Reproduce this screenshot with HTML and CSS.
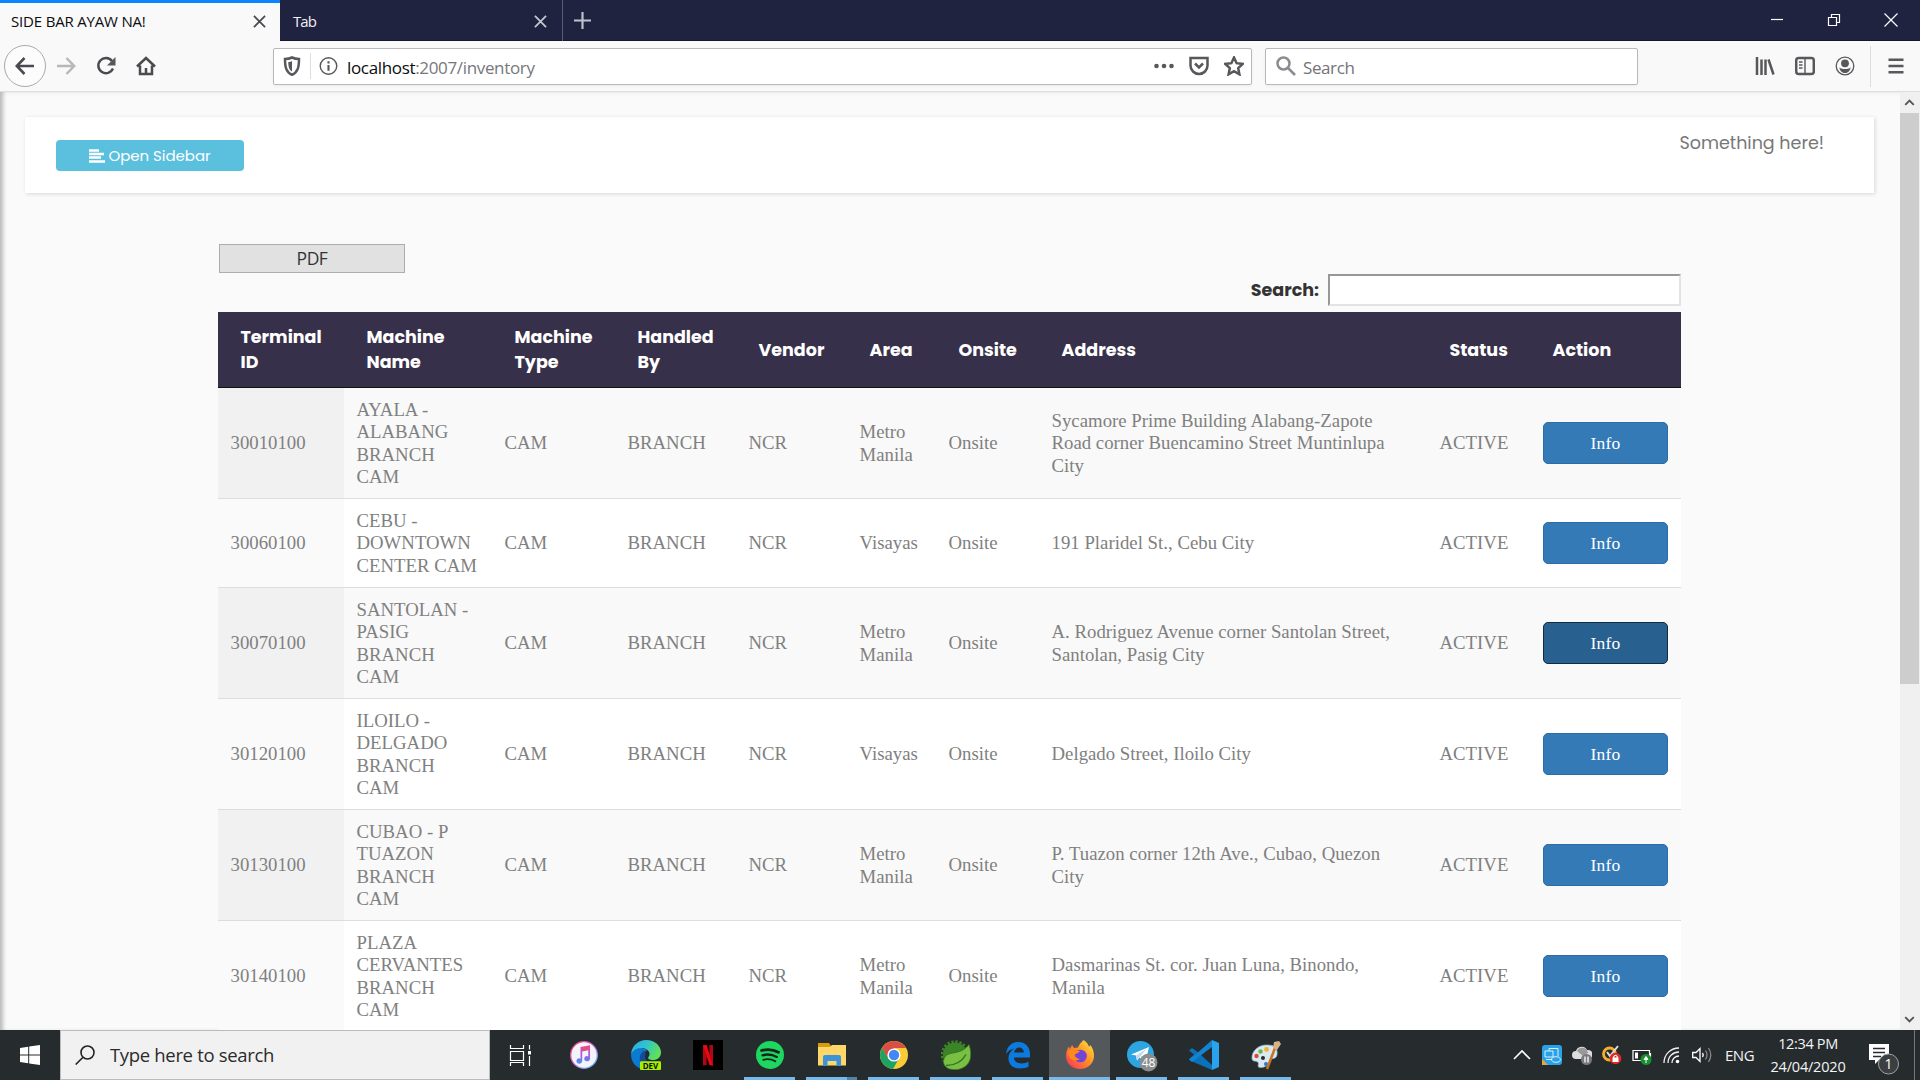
FILE: index.html
```html
<!DOCTYPE html>
<html lang="en">
<head>
<meta charset="utf-8">
<title>SIDE BAR AYAW NA!</title>
<link rel="stylesheet" href="styles.css">
</head>
<body>
<div class="screen">
  <div class="tabs">
    <div class="tab active"><span class="t-main">SIDE BAR AYAW NA!</span><svg class="x" viewBox="0 0 14 14"><path d="M1 1l12 12M13 1L1 13"/></svg></div>
    <div class="tab idle"><span class="t-idle">Tab</span><svg class="x" viewBox="0 0 14 14"><path d="M1 1l12 12M13 1L1 13"/></svg></div>
    <svg class="plus" viewBox="0 0 18 18"><path d="M9 0v18M0 9h18"/></svg>
    <div class="wincontrols">
      <svg viewBox="0 0 14 14"><path d="M1 6.500h12"/></svg>
      <svg viewBox="0 0 14 14"><path d="M1.500 4.500h8v8h-8zM4.500 4V1.500h8v8H10"/></svg>
      <svg viewBox="0 0 14 14"><path d="M.5.5l13 13M13.500.5l-13 13"/></svg>
    </div>
  </div>

  <div class="nav">
    <span class="back"><svg viewBox="0 0 20 20"><path d="M19 10H2M9.500 2L1.800 10l7.700 8"/></svg></span>
    <svg class="ico fwd" viewBox="0 0 20 20"><path d="M1 10h17M10.500 2l7.700 8-7.700 8"/></svg>
    <svg class="ico reload" viewBox="0 0 20 20"><path d="M17 12.500A7.600 7.600 0 1 1 16 5"/><path class="fill" d="M19.500 1v8.500H11z"/></svg>
    <svg class="ico home" viewBox="0 0 20 20"><path d="M1 10.500L10 2l9 8.500M4 9.500V18h12V9.500M10 18v-6"/></svg>
    <div class="url">
      <svg class="ico shield" viewBox="0 0 20 20"><path d="M10 1.500c2.500 1.200 4.500 1.500 7 1.500 0 8-1 13-7 15.800C4 16 3 11 3 3c2.500 0 4.500-.3 7-1.500z"/><path class="fill" d="M10 5v10.500c-3-1.700-3.700-5-3.700-9.500 1.500 0 2.500-.4 3.700-1z"/></svg>
      <i class="divider"></i>
      <svg class="ico info" viewBox="0 0 20 20"><circle cx="10" cy="10" r="8.700"/><path class="stem" d="M10 9v6M10 5v2.300"/></svg>
      <span class="address"><b>localhost</b>:2007/inventory</span>
      <svg class="ico dots" viewBox="0 0 20 20"><circle cx="2.500" cy="10" r="2.300"/><circle cx="10" cy="10" r="2.300"/><circle cx="17.500" cy="10" r="2.300"/></svg>
      <svg class="ico" viewBox="0 0 20 20"><path d="M1.500 2h17v7.500a8.500 8.500 0 0 1-17 0zM6 7.500l4 4 4-4"/></svg>
      <svg class="ico star" viewBox="0 0 20 20"><path d="M10 1.500l2.600 5.700 6.100.7-4.500 4.200 1.200 6.200-5.400-3.100-5.400 3.100 1.200-6.200L1.300 7.900l6.100-.7z"/></svg>
    </div>
    <div class="find"><svg class="ico" viewBox="0 0 20 20"><circle cx="7.500" cy="7.500" r="6"/><path d="M12 12l7 7"/></svg><span>Search</span></div>
    <div class="tools">
      <svg class="ico" viewBox="0 0 20 20"><path d="M2 1v18M6.500 3.500V19M10.500 3.500V19M13.500 3.500l5 15"/></svg>
      <svg class="ico" viewBox="0 0 20 20"><rect x="1.200" y="2" width="17.600" height="16" rx="2.500"/><path class="thin" d="M10 2v16M4 6h3.500M4 9h3.500M4 12h3.500"/></svg>
      <svg class="ico user" viewBox="0 0 20 20"><circle cx="10" cy="10" r="8.800"/><circle class="fill" cx="10" cy="7.300" r="3.900"/><path class="fill" d="M4.300 11.500c3 2 8.400 2 11.400 0-1 4-3 5.500-5.700 5.500s-4.700-1.500-5.700-5.500z"/></svg>
      <i class="divider"></i>
      <svg class="ico burger" viewBox="0 0 20 20"><path d="M2.500 3.700h15M2.500 10h15M2.500 16.300h15"/></svg>
    </div>
  </div>

  <div class="viewport">
    <div class="page">
      <header class="banner">
        <button class="open"><svg viewBox="0 0 16 14"><path d="M0 1.500h10M0 5h15M0 8.500h12M0 12.500h16"/></svg><span>Open Sidebar</span></button>
        <span class="something">Something here!</span>
      </header>
      <main class="content">
        <button class="pdf">PDF</button>
        <label class="search"><span>Search:</span><input type="text"></label>
        <table>
          <colgroup><col class="c1"><col class="c2"><col class="c3"><col class="c4"><col class="c5"><col class="c6"><col class="c7"><col class="c8"><col class="c9"><col class="c10"></colgroup>
          <thead><tr><th>Terminal<br>ID</th><th>Machine<br>Name</th><th>Machine<br>Type</th><th>Handled<br>By</th><th>Vendor</th><th>Area</th><th>Onsite</th><th>Address</th><th>Status</th><th>Action</th></tr></thead>
          <tbody>
            <tr><td>30010100</td><td>AYALA -<br>ALABANG<br>BRANCH<br>CAM</td><td>CAM</td><td>BRANCH</td><td>NCR</td><td>Metro<br>Manila</td><td>Onsite</td><td>Sycamore Prime Building Alabang-Zapote<br>Road corner Buencamino Street Muntinlupa<br>City</td><td>ACTIVE</td><td><button class="btn">Info</button></td></tr>
            <tr class="short"><td>30060100</td><td>CEBU -<br>DOWNTOWN<br>CENTER CAM</td><td>CAM</td><td>BRANCH</td><td>NCR</td><td>Visayas</td><td>Onsite</td><td>191 Plaridel St., Cebu City</td><td>ACTIVE</td><td><button class="btn">Info</button></td></tr>
            <tr><td>30070100</td><td>SANTOLAN -<br>PASIG<br>BRANCH<br>CAM</td><td>CAM</td><td>BRANCH</td><td>NCR</td><td>Metro<br>Manila</td><td>Onsite</td><td>A. Rodriguez Avenue corner Santolan Street,<br>Santolan, Pasig City</td><td>ACTIVE</td><td><button class="btn pressed">Info</button></td></tr>
            <tr><td>30120100</td><td>ILOILO -<br>DELGADO<br>BRANCH<br>CAM</td><td>CAM</td><td>BRANCH</td><td>NCR</td><td>Visayas</td><td>Onsite</td><td>Delgado Street, Iloilo City</td><td>ACTIVE</td><td><button class="btn">Info</button></td></tr>
            <tr><td>30130100</td><td>CUBAO - P<br>TUAZON<br>BRANCH<br>CAM</td><td>CAM</td><td>BRANCH</td><td>NCR</td><td>Metro<br>Manila</td><td>Onsite</td><td>P. Tuazon corner 12th Ave., Cubao, Quezon<br>City</td><td>ACTIVE</td><td><button class="btn">Info</button></td></tr>
            <tr><td>30140100</td><td>PLAZA<br>CERVANTES<br>BRANCH<br>CAM</td><td>CAM</td><td>BRANCH</td><td>NCR</td><td>Metro<br>Manila</td><td>Onsite</td><td>Dasmarinas St. cor. Juan Luna, Binondo,<br>Manila</td><td>ACTIVE</td><td><button class="btn">Info</button></td></tr>
          </tbody>
        </table>
      </main>
    </div>
    <div class="scrollbar">
      <svg viewBox="0 0 20 21"><path d="M5.500 13l4.500-4.500 4.500 4.500"/></svg>
      <i class="thumb"></i>
      <svg class="down" viewBox="0 0 20 21"><path d="M5.500 8l4.500 4.500 4.500-4.500"/></svg>
    </div>
  </div>

  <div class="taskbar">
    <div class="start"><svg viewBox="0 0 20 20"><path d="M0 3l8.200-1.200v7.700H0zM9.200 1.600L20 0v9.500H9.200zM0 10.500h8.200v7.700L0 17zM9.200 10.500H20V20L9.200 18.400z"/></svg></div>
    <div class="type"><svg viewBox="0 0 20 20"><circle cx="12.500" cy="7.500" r="6.500"/><path d="M8 12.200L.7 19.500"/></svg><span>Type here to search</span></div>
    <div class="apps">
      <div class="app taskview"><svg viewBox="0 0 30 30"><path d="M4.500 5v3.500h13V5M4.500 11.500h13v9h-13zM4.500 26v-3.500h13V26M23.500 5v4.500M23.500 16v10"/><path class="blk" d="M22 11h3v3.500h-3z"/></svg></div>
      <div class="app"><svg viewBox="0 0 30 30"><defs><linearGradient id="note" x1="0" y1="0" x2="0" y2="1"><stop offset="0" stop-color="#fa4a66"/><stop offset=".55" stop-color="#a457e8"/><stop offset="1" stop-color="#3b9df5"/></linearGradient><linearGradient id="ring" x1="0" y1="0" x2="1" y2="1"><stop offset="0" stop-color="#fb4467"/><stop offset=".5" stop-color="#c765e0"/><stop offset="1" stop-color="#3bd0f5"/></linearGradient></defs><circle cx="15" cy="15" r="13.300" fill="#f5f3fa" stroke="url(#ring)" stroke-width="1.300"/><path fill="url(#note)" d="M11.500 7L21 5.200v13.500a2.900 2.600 0 1 1-1.700-2.300v-6.200l-6.100 1.200v9.600a2.900 2.600 0 1 1-1.700-2.300z"/></svg></div>
      <div class="app"><svg viewBox="0 0 30 30"><defs><linearGradient id="edge" x1="0" y1="0" x2="1" y2=".4"><stop offset="0" stop-color="#2aa9e9"/><stop offset=".5" stop-color="#2fc3cf"/><stop offset="1" stop-color="#5fe05c"/></linearGradient></defs><path fill="#0d7ad2" d="M0 14C3 8 12 6 16 10c-4 3-4 8-1 11 3 2 8 2 12 0-3 6-8 8.500-13 8.500C6 29 0 23 0 14z"/><path fill="#154b97" d="M13 10.500c-5 3-6 12-1 16 3 2.500 9 2 13-2-6 0-13-4-10.500-11z"/><path fill="url(#edge)" d="M0 14C1 5 8 0 15 0c9 0 15 6 15 12.500 0 5-4 7.500-8 7.500-3 0-6-1-4.500-3 3-4-.5-8-5.500-9C7 7.500 2.500 9.500 0 14z"/><rect x="9" y="21.300" width="21" height="8.700" rx="1" fill="#a4f000"/><text x="19.500" y="28.500" font-size="8" font-weight="700" text-anchor="middle" fill="#111">DEV</text></svg></div>
      <div class="app"><svg viewBox="0 0 30 30"><path fill="#000" d="M0 0h30v30H0z"/><path fill="#b20710" d="M10 5h3.600v20L10 25.500zM16.400 5H20v20.500l-3.600-.5z"/><path fill="#e50914" d="M10 5h3.600L20 25.500l-3.600-.5z"/></svg></div>
      <div class="app run"><svg viewBox="0 0 30 30"><circle cx="15" cy="15" r="14" fill="#1ed760"/><path fill="none" stroke="#16261c" stroke-linecap="round" stroke-width="2.800" d="M6.500 10.500c6-1.600 12-1 17 1.800"/><path fill="none" stroke="#16261c" stroke-linecap="round" stroke-width="2.300" d="M7.500 15.300c5-1.400 10-.8 14.300 1.600"/><path fill="none" stroke="#16261c" stroke-linecap="round" stroke-width="1.900" d="M8.300 19.800c4-1.100 8.500-.6 12 1.400"/></svg></div>
      <div class="app run group"><svg viewBox="0 0 30 30"><path fill="#d99a0b" d="M1 3h11l2 3v5H1z"/><path fill="#ffd668" d="M1 7h12l2-2h14v20.500H1z"/><path fill="#3b94da" d="M6 26V17q0-2 2-2h14q2 0 2 2v9h-4.500v-5h-9v5z"/></svg></div>
      <div class="app run"><svg viewBox="0 0 30 30"><circle cx="15" cy="15" r="14" fill="#f9cb35"/><path fill="#d94f43" d="M2.900 8A14 14 0 0 1 27.100 8H15l-6 11z"/><path fill="#1da462" d="M2.900 8A14 14 0 0 0 14 29l6-10.500-11 0z"/><circle cx="15" cy="15" r="6.600" fill="#fff"/><circle cx="15" cy="15" r="5.200" fill="#4688f1"/></svg></div>
      <div class="app run"><svg viewBox="0 0 30 30"><circle cx="14" cy="14.500" r="12" fill="#3b8526"/><circle cx="14" cy="14.500" r="12.900" fill="none" stroke="#3b8526" stroke-width="2.600" stroke-dasharray="2.300 1.750"/><path fill="#78bf43" stroke="#2f6e1f" stroke-width=".8" d="M28 4.500c2.500 7 2.500 14-.5 18.500-4 6-12 8-19 6-6-2-8-8-4-13 5-5 16-1 23.500-11.500z"/><path fill="none" stroke="#327320" stroke-width="1.500" d="M5 25.500c9 0 16-4 20-11"/></svg></div>
      <div class="app run"><svg viewBox="0 0 30 30"><path fill="#0b7be0" d="M3 14C4 6 9 2 15.500 2 23 2 27 8 27 14v3.500H11c0 4 3.500 6 7.500 6 3 0 5.500-.8 7-2v5.300C23.500 28 20.500 28.500 17 28.500c-7 0-11.500-4-11.500-10 0-4.500 2.500-8 6-10C8 9 5 11 3 14zm8.200-1.500h9.600c0-3-1.800-5-4.600-5-2.700 0-4.600 2-5 5z"/></svg></div>
      <div class="app run on"><svg viewBox="0 0 30 30"><defs><linearGradient id="fox" x1="1" y1="0" x2="0" y2="1"><stop offset="0" stop-color="#fff044"/><stop offset=".45" stop-color="#ff9124"/><stop offset="1" stop-color="#f72c62"/></linearGradient></defs><path fill="url(#fox)" d="M18.500 0c3 2 5 4 5.500 7l1.200-2C28 8 29 12 29 16c0 7-6 13-14 13S1 23 1 16c0-4 1-7 3-9.500L5 9l2-4 2 3 4-.5c.5-2.500 3-5 5.500-7.500z"/><circle cx="15.500" cy="16" r="6.300" fill="#7243d7"/><path fill="#ff8a1c" d="M2 12l4-2.500 4 1 5 .5c-1 2-4 2.500-5 3.500s1 4 5 4.500c-4 3-10 1-11-3z"/></svg></div>
      <div class="app run"><svg viewBox="0 0 34 34"><circle cx="15.500" cy="16.500" r="13.500" fill="#2ca5e0"/><path fill="#fff" d="M6 16.500L24 9l-3.500 15-6-4.500-2.500 3-1-5z"/><path fill="#c5dbe8" d="M11 17.500L22 10.500l-7.500 9-2.500 3z"/><circle cx="23.500" cy="24.500" r="9" fill="#8a8d8f"/><text x="23.500" y="28.700" font-size="12" text-anchor="middle" fill="#fff">48</text></svg></div>
      <div class="app run"><svg viewBox="0 0 30 30"><path fill="#0a72bb" d="M0 10.500L3 8l5 3.500L23 25v5L1 20.500 0 19l5-4.500z"/><path fill="#1683ce" d="M0 19.500L3 22 23 7V0L6 15z"/><path fill="#29a3ee" d="M23 0l7 3v24l-7 3z"/></svg></div>
      <div class="app run"><svg viewBox="0 0 30 30"><path fill="#d9e8f2" stroke="#8ba9ba" stroke-width=".7" d="M1 19C0 11 8 4 17 5c7 0 10 4 9 10-1 5-5 2-7 6s-5 7-10 6.500c-4-.5 0-4-2.500-5.500S2 22 1 19z"/><circle cx="5.500" cy="16" r="2.200" fill="#dc4b36"/><circle cx="9.500" cy="11.500" r="2.200" fill="#6bb840"/><circle cx="15.500" cy="9.500" r="2.400" fill="#f2b42e"/><circle cx="12" cy="18" r="2" fill="#272b2e"/><circle cx="15" cy="24" r="2" fill="#3576c5"/><path stroke="#c87420" stroke-width="2.500" d="M16 29l8-21"/><path fill="#d5b386" d="M22 8l1-6 5-1 2 3-4 6z"/></svg></div>
    </div>
    <div class="tray">
      <svg class="chev" viewBox="0 0 20 20"><path d="M2 14l8-8 8 8"/></svg>
      <svg viewBox="0 0 20 20"><rect width="20" height="20" rx="3" fill="#2aa2e5"/><path fill="none" stroke="#d3f2ff" stroke-width="1" d="M3 6h8v6H3zM7 6V3.500h9V11M4 14.500h6"/><ellipse cx="14" cy="14.500" rx="4.300" ry="2.800" fill="none" stroke="#d3f2ff"/><path fill="#e9a63b" d="M0 14l6 6H0z"/></svg>
      <svg viewBox="0 0 20 20"><path fill="#ddd" d="M4 14a4 4 0 0 1 0-8 6 6 0 0 1 11-1 4.500 4.500 0 0 1 2 9z"/><path fill="#999" d="M5 6a6 6 0 0 1 10-1l1 3-5 3z"/><circle cx="14.500" cy="14.500" r="5.500" fill="#77797b"/><path stroke="#fff" stroke-width="1.300" d="M13 11.500v6M16 11.500v6"/></svg>
      <svg viewBox="0 0 20 20"><circle cx="7.500" cy="9" r="6" fill="none" stroke="#f4af2c" stroke-width="2.800"/><path fill="none" stroke="#ddd" stroke-width="2" d="M5 7l3 4 8-10"/><circle cx="13.500" cy="13.500" r="5.800" fill="#dc2b22"/><path fill="#fff" d="M10.500 12.500h6V17h-6z"/><path fill="none" stroke="#fff" stroke-width="1.200" d="M11.800 13v-1.500q1.700-2.500 3.400 0V13"/></svg>
      <svg viewBox="0 0 20 20"><path fill="none" stroke="#fff" stroke-width="1.200" d="M1 5.500h16.500v10H1zM18.500 8v4"/><path fill="#fff" d="M3 7.500h3v6H3z"/><circle cx="14" cy="14.500" r="5.500" fill="#17912b"/><path stroke="#fff" fill="#fff" d="M14 11.500l2 3h-4zM14 14v4"/></svg>
      <svg viewBox="0 0 20 20"><path fill="none" stroke="#f2f2f2" stroke-width="1.300" d="M2 18C2 9 9 3 17 3M6 18C6 11.500 11 7 17 7M10 18c0-4 3-7 7-7"/><circle cx="15.500" cy="16.500" r="1.800" fill="#fff"/></svg>
      <svg viewBox="0 0 20 20"><path fill="none" stroke="#fff" stroke-width="1.300" d="M.7 7.500H4L8 3.500v13l-4-4H.7zM10.500 8q1.500 2 0 4"/><path fill="none" stroke="#888" stroke-width="1.300" d="M13.500 5.500q3 4.500 0 9M16.500 3q4.500 7 0 14"/></svg>
      <span class="eng">ENG</span>
      <span class="clock"><span class="time">12:34 PM</span><span>24/04/2020</span></span>
      <svg class="notif" viewBox="0 0 32 32"><path fill="#fff" d="M1 1h20v16H11l-4 4v-4H1z"/><path fill="none" stroke="#272b2e" stroke-width="1.300" d="M5 5.500h12M5 9.500h12M5 13.500h8"/><circle cx="20.500" cy="21" r="10" fill="#3b3f42" stroke="#a0a2a3"/><text x="20.500" y="26" font-size="14" text-anchor="middle" fill="#fff">1</text></svg>
      <i class="peek"></i>
    </div>
  </div>
</div>
</body>
</html>
```
FILE: styles.css
```css
* { box-sizing: border-box; }
body { margin: 0; font-family: "Open Sans", sans-serif; }
button, input { font: inherit; margin: 0; }
svg { display: block; flex: none; }
.screen { width: 1920px; height: 1080px; display: flex; flex-direction: column; overflow: hidden; background: #fafafa; }

.tabs { height: 41px; flex: none; display: flex; background: #202340; border-bottom: 1px solid #14162d; font-size: 15px; }
.tab { display: flex; align-items: center; justify-content: space-between; height: 41px; white-space: nowrap; }
.tab.active { width: 280px; background: #f9f9fa; border-top: 3px solid #0a84ff; padding: 0 14px 2px 11px; color: #0c0c0d; }
.tab.idle { width: 283px; border-right: 1px solid #5b5d74; padding: 1px 15px 0 13px; color: #f0f0f4; }
.t-main { letter-spacing: -0.18px; }
.t-idle { letter-spacing: -0.9px; }
.x { width: 13px; height: 13px; margin-top: 1px; stroke: #4a4a4f; stroke-width: 1.900; }
.idle .x { stroke: #c6c7d0; }
.plus { width: 17px; height: 17px; margin: 11.500px 0 0 11px; stroke: #c0c1ca; stroke-width: 2.300; }
.wincontrols { margin-left: auto; display: flex; gap: 43px; padding: 13px 22px 0 0; }
.wincontrols svg { width: 14px; height: 14px; fill: none; stroke: #fff; stroke-width: 1.200; }

.nav { height: 51px; flex: none; display: flex; align-items: center; background: #f9f9fa; border-bottom: 1px solid #dedee0; padding-left: 4px; }
.ico { width: 20px; height: 20px; fill: none; stroke: #58585c; stroke-width: 2.500; }
.ico .fill { fill: #58585c; stroke: none; }
.ico .thin { stroke-width: 1.400; }
.back { width: 42px; height: 42px; border: 1px solid #aaa; border-radius: 50%; display: grid; place-items: center; background: #fcfcfc; }
.back svg { width: 20px; height: 20px; fill: none; stroke: #4a4a4f; stroke-width: 2.600; }
.fwd { margin-left: 10px; stroke: #b8b8ba; }
.reload { margin-left: 20px; stroke: #4a4a4f; }
.home { margin-left: 20px; stroke: #4a4a4f; }
.url { width: 979px; height: 37px; margin-left: 117px; border: 1px solid #b9b9bb; border-radius: 2px; background: #fff; display: flex; align-items: center; padding: 0 7px 0 8px; box-shadow: 0 1px 3px rgba(0,0,0,.06); }
.shield { width: 20px; }
.divider { width: 1px; height: 26px; background: #ddd; }
.url .divider { margin-left: 8px; }
.info { margin-left: 8px; width: 19px; stroke-width: 1.500; }
.info .stem { stroke-width: 2.200; }
.address { margin: 2px 0 0 9px; flex: 1; font-size: 17px; letter-spacing: -0.34px; color: #77777b; }
.address b { font-weight: 400; color: #0c0c0d; }
.dots { fill: #58585c; stroke: none; }
.dots + .ico, .star { margin-left: 15px; }
.find { width: 373px; height: 37px; margin-left: 13px; border: 1px solid #b9b9bb; border-radius: 2px; background: #fff; display: flex; align-items: center; gap: 7px; padding-left: 10px; color: #737378; font-size: 17px; letter-spacing: -0.4px; box-shadow: 0 1px 3px rgba(0,0,0,.06); }
.find span { margin-top: 2px; }
.find .ico { stroke: #8c8c90; }
.tools { margin-left: auto; display: flex; align-items: center; gap: 20px; padding-right: 14px; }
.tools .divider { height: 41px; margin: 0 -5px 0 -5px; }
.tools .burger { width: 20px; }
.tools .user { stroke-width: 1.300; }

.viewport { height: 938px; flex: none; display: flex; background: #fafafa; overflow: hidden; }
.page { width: 1900px; padding: 25px 26px 0 25px; box-shadow: inset 4px 6px 4px -3px rgba(0,0,0,.02), inset 5px 0 4px -2px rgba(0,0,0,.25); font-family: Poppins, "Inter", sans-serif; }
.banner { height: 76px; background: #fff; box-shadow: 1px 1px 4px rgba(0,0,0,.14); display: flex; justify-content: space-between; align-items: flex-start; padding: 23px 50px 0 31px; }
.open { width: 188px; height: 31px; border: 0; border-radius: 4px; background: #5bc0de; color: #fff; font-size: 15px; letter-spacing: -0.05px; display: flex; align-items: center; justify-content: center; gap: 3px; padding: 0; }
.open svg { width: 16px; height: 14px; stroke: #fff; stroke-width: 2.500; }
.something { font-size: 17.500px; line-height: 26px; margin-top: -10px; color: #777; letter-spacing: 0; }
.content { width: 1463px; margin: 51px 0 0 193px; display: flex; flex-direction: column; }
.pdf { width: 186px; height: 29px; margin-left: 1px; border: 1px solid #adadad; background: #e1e1e1; color: #333; font-family: "Open Sans", sans-serif; font-size: 17.500px; line-height: 25px; padding: 0; letter-spacing: -0.5px; }
.search { display: flex; justify-content: flex-end; align-items: center; gap: 9px; height: 32px; margin-top: 1px; font-size: 17.500px; font-weight: 700; color: #333; }
.search input { width: 353px; height: 32px; border: 2px solid; border-color: #979797 #e3e3e3 #e3e3e3 #979797; background: #fff; }
table { margin-top: 6px; width: 1463px; table-layout: fixed; border-collapse: separate; border-spacing: 0; }
.c1 { width: 126px; } .c2 { width: 148px; } .c3 { width: 123px; } .c4 { width: 121px; } .c5 { width: 111px; }
.c6 { width: 89px; } .c7 { width: 103px; } .c8 { width: 388px; } .c9 { width: 103px; } .c10 { width: 151px; }
th { height: 76px; padding: 1px 0 0 22.500px; text-align: left; background: #37304a; color: #fff; border-bottom: 1px solid #111; font-size: 17.500px; line-height: 25px; font-weight: 700; letter-spacing: 0; white-space: nowrap; }
td { height: 111px; padding: 1px 0 0 12.500px; font-family: "Liberation Serif", serif; font-size: 18.750px; letter-spacing: 0.02px; line-height: 22.500px; color: #808080; background: #f9f9f9; border-bottom: 1px solid #ddd; white-space: nowrap; }
td:first-child { background: #f1f1f1; }
td:last-child { padding-top: 0; }
.short td { height: 89px; }
tr:nth-child(even) td { background: #fff; }
tr:nth-child(even) td:first-child { background: #fafafa; }
.btn { display: block; width: 125px; height: 42px; border: 1px solid #2e6da4; border-radius: 5px; background: #337ab7; color: #fff; font-size: 17.500px; letter-spacing: 0.2px; padding: 0 0 0 1px; }
.pressed { background: #286090; border-color: #122b40; }
.scrollbar { width: 20px; height: 938px; background: #f0f0f0; display: flex; flex-direction: column; }
.scrollbar svg { width: 19px; height: 21px; fill: none; stroke: #555; stroke-width: 2; }
.thumb { height: 571px; width: 19px; background: #cdcdcd; }
.down { margin-top: auto; }

.taskbar { height: 50px; flex: none; display: flex; background: #262b2e; color: #f4f4f4; }
.start { width: 60px; display: grid; place-items: center; }
.start svg { width: 20px; height: 20px; fill: #fff; }
.type { width: 430px; background: #f1f1f1; border: 1px solid #bbb; display: flex; align-items: center; gap: 15px; padding: 0 0 1px 14px; color: #2b2b2b; font-size: 18.500px; letter-spacing: -0.33px; }
.type svg { width: 20px; height: 20px; fill: none; stroke: #222; stroke-width: 1.600; }
.apps { display: flex; gap: 1px; }
.app { width: 61px; height: 50px; display: grid; place-items: center; }
.app svg { width: 30px; height: 30px; }
.app svg[viewBox="0 0 34 34"] { width: 34px; height: 34px; }
.taskview { margin-right: 1px; }
.taskview svg { fill: none; stroke: #fff; stroke-width: 1.200; }
.taskview .blk { fill: #fff; stroke: none; }
.run { background: linear-gradient(#76b9ed, #76b9ed) center bottom / 51px 3px no-repeat; }
.group { background-image: linear-gradient(90deg, #76b9ed 41px, #5283a9 41px); }
.on { background-color: #55585a; background-size: 61px 3px; }
.tray { margin-left: auto; display: flex; align-items: center; gap: 10px; padding-right: 5px; }
.tray svg { width: 20px; height: 20px; }
.tray .chev { fill: none; stroke: #fff; stroke-width: 1.600; }
.eng { font-size: 15px; width: 29px; letter-spacing: -0.5px; margin: 0 5px 0 3px; }
.clock { width: 78px; display: flex; flex-direction: column; align-items: center; font-size: 14.500px; line-height: 23px; letter-spacing: -0.2px; white-space: nowrap; }
.time { letter-spacing: -0.35px; }
.tray .notif { width: 32px; height: 32px; margin: 8px 4px 0 11px; }
.peek { width: 1px; height: 50px; background: #777; }
```
